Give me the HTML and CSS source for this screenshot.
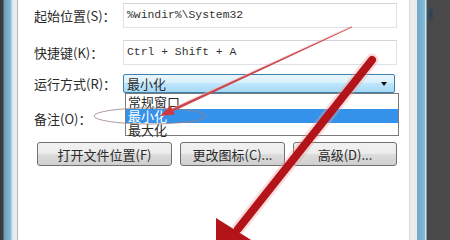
FILE: index.html
```html
<!DOCTYPE html>
<html lang="zh-CN">
<head>
  <meta charset="UTF-8">
  <title>快捷方式属性</title>
  <link rel="stylesheet" href="styles.css">
</head>
<body>
  <div class="screen">
    <div class="frame-left"></div>

    <div class="page">
      <div class="row row-target">
        <label class="label">起始位置(S)：</label>
        <div class="field">%windir%\System32</div>
      </div>
      <div class="row row-hotkey">
        <label class="label">快捷键(K)：</label>
        <div class="field">Ctrl + Shift + A</div>
      </div>
      <div class="row row-run">
        <label class="label">运行方式(R)：</label>
        <div class="combo">
          <span class="combo-value">最小化</span>
          <span class="caret"></span>
          <ul class="droplist">
            <li>常规窗口</li>
            <li class="active">最小化</li>
            <li>最大化</li>
          </ul>
        </div>
      </div>
      <div class="row row-note">
        <label class="label">备注(O)：</label>
      </div>
      <div class="buttons">
        <button class="btn btn-open">打开文件位置(F)</button>
        <button class="btn btn-icon">更改图标(C)...</button>
        <button class="btn btn-adv">高级(D)...</button>
      </div>
    </div>

    <div class="frame-right"></div>

    <!-- hand-drawn marks on top of the dialog -->
    <svg class="marks" width="450" height="240" viewBox="0 0 450 240">
      <ellipse cx="150" cy="116" rx="56" ry="8" fill="none" stroke="#9a7f84" stroke-width="1" opacity="0.8"/>
      <polygon points="352.2,26.6 351.8,27.4 171.9,111.9 173.5,108.3" fill="#f2b3b5" opacity="0.7" transform="translate(0,-1)"/>
      <polygon points="352.2,26.6 351.8,27.4 171.9,111.9 173.5,108.3" fill="#c9474d"/>
      <polygon points="160,116 170.6,105.6 174.8,114.6" fill="#d0383f"/>
      <line x1="372" y1="60" x2="238" y2="229" stroke="#f0a0a0" stroke-width="13" stroke-linecap="round" opacity="0.35"/>
      <line x1="372" y1="60" x2="238" y2="229" stroke="#b3141a" stroke-width="8" stroke-linecap="round"/>
      <polygon points="216,218 256,243 216,256" fill="#b3141a"/>
    </svg>
  </div>
</body>
</html>
```

FILE: styles.css
```css
* { margin: 0; padding: 0; box-sizing: border-box; }
body { background: #4a4a4a; }

.screen {
  position: relative; width: 450px; height: 240px;
  display: flex; overflow: hidden;
  font-family: "Noto Sans CJK SC", sans-serif; font-size: 13px; color: #2a2a2a;
}

.frame-left {
  width: 18px; flex: none;
  background: linear-gradient(to right, #3c3c3c 0, #3c3c3c 3px, #6a9cba 4px, #8bbcd6 11px, #d4eaf5 12px, #d4eaf5 13px, #ececec 14px, #ececec 17px, #b8b8b8 17px);
}
.frame-right {
  flex: 1;
  background:
    radial-gradient(ellipse 3px 9px at 22px 14px, #1f3f66 0, rgba(31,63,102,0) 100%),
    linear-gradient(to right, #d9d9d9 0, #d9d9d9 1px, #ececec 1px, #ececec 8px, #6fa6c6 8px, #86bbd8 16px, #c6ebf8 16px, #c6ebf8 17px, #4a4a4a 18px);
}

.page {
  width: 391px; flex: none; background: #fff;
  padding: 3px 12px 0 16px;
}

.row { display: flex; align-items: center; }
.label { width: 89px; flex: none; white-space: nowrap; }

.field {
  width: 274px; height: 25px;
  border: 1px solid #dfe1e6; border-top-color: #d2d4da;
  padding-left: 3px; line-height: 23px;
  font-family: "Liberation Mono", monospace; font-size: 11.4px; color: #333;
}
.row-hotkey { margin-top: 12px; }
.row-run { margin-top: 9px; }
.row-note { margin-top: 13px; height: 24px; }

.combo {
  position: relative; width: 272px; height: 19px;
  border: 1px solid #3c7fb1; border-radius: 2px;
  background: linear-gradient(#eaf6fd 0%, #d9f0fc 45%, #bee6fd 50%, #a7d9f5 100%);
  padding-left: 3px; line-height: 17px;
}
.caret {
  position: absolute; right: 7px; top: 7px;
  border-left: 3.5px solid transparent; border-right: 3.5px solid transparent;
  border-top: 4px solid #111;
}
.droplist {
  position: absolute; top: 18px; left: 1px; width: 274px; height: 43px;
  list-style: none; background: #fff;
  border: 1px solid #7a7a7a; padding-top: 1px; z-index: 2;
}
.droplist li { height: 14px; line-height: 14px; padding-left: 2px; }
.droplist li.active { background: #3592ea; color: #fff; }

.buttons { display: flex; gap: 8px; margin: 12px 0 0 3px; }
.btn {
  height: 24px; border: 1px solid #707070; border-radius: 3px;
  background: linear-gradient(#f2f2f2 0%, #ebebeb 50%, #dddddd 50%, #cfcfcf 100%);
  font-family: inherit; font-size: 13px; color: #2a2a2a;
}
.btn-open { width: 135px; }
.btn-icon { width: 105px; }
.btn-adv { width: 104px; }

.marks { position: absolute; left: 0; top: 0; pointer-events: none; z-index: 5; }
```
